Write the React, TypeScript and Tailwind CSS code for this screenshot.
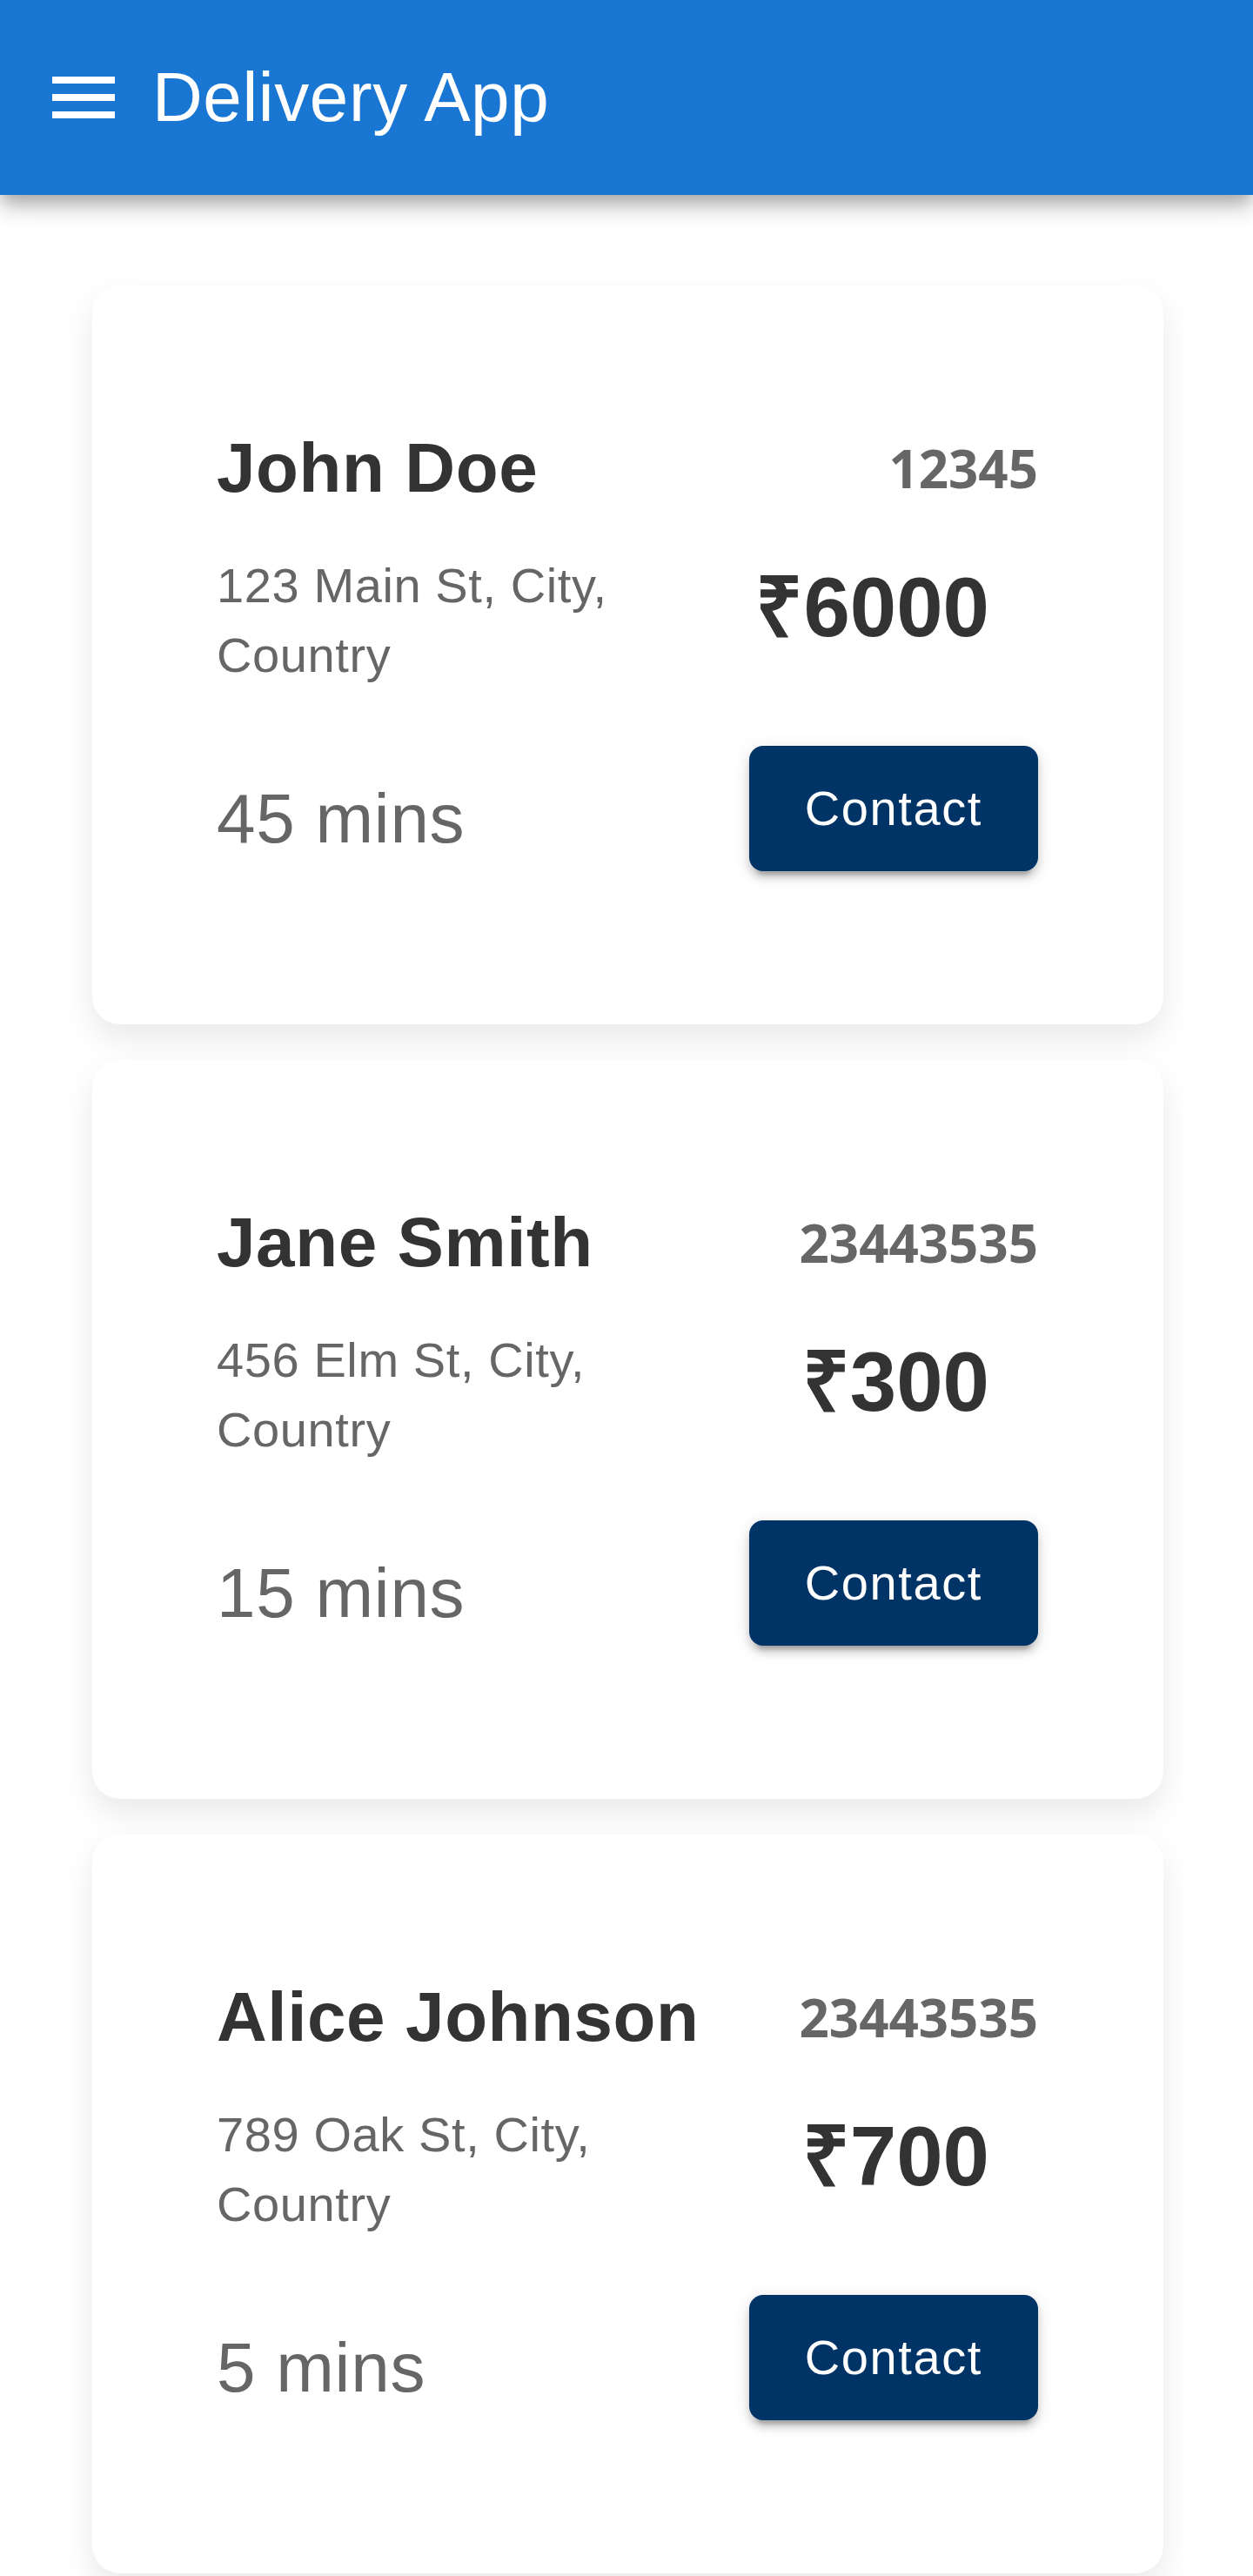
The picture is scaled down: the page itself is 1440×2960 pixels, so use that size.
import React from "react";

type Order = {
  name: string;
  id: string;
  address: string;
  price: string;
  time: string;
};

const orders: Order[] = [
  { name: "John Doe", id: "12345", address: "123 Main St, City, Country", price: "₹6000", time: "45 mins" },
  { name: "Jane Smith", id: "23443535", address: "456 Elm St, City, Country", price: "₹300", time: "15 mins" },
  { name: "Alice Johnson", id: "23443535", address: "789 Oak St, City, Country", price: "₹700", time: "5 mins" },
];

function MenuIcon() {
  return (
    <svg width="96" height="96" viewBox="0 0 24 24" fill="#ffffff" aria-hidden="true">
      <path d="M3 18h18v-2H3zm0-5h18v-2H3zm0-7v2h18V6z" />
    </svg>
  );
}

function OrderCard({ order }: { order: Order }) {
  return (
    <div className="ml-[106px] w-[1231px] rounded-[32px] bg-white pt-[146px] pl-[143px] pr-[144px] pb-[176px] shadow-[0_16px_36px_rgba(0,0,0,0.09)]">
      <div className="flex h-[128px] items-center justify-between">
        <div className="text-[80px] font-bold leading-[128px] tracking-[0.6px] text-[#333333]">{order.name}</div>
        <div className="font-['Open_Sans',sans-serif] text-[60px] font-bold leading-[90px] text-[#666666]">
          {order.id}
        </div>
      </div>
      <div className="mt-[31px] flex items-start justify-between">
        <div className="w-[472px] text-[56px] leading-[80px] tracking-[0.6px] text-[#666666]">{order.address}</div>
        <div className="mr-[56px] mt-[1px] text-[96px] font-bold leading-[128px] text-[#333333]">{order.price}</div>
      </div>
      <div className="mt-[64px] flex items-end justify-between">
        <div className="text-[80px] leading-[120px] tracking-[0.75px] text-[#666666]">{order.time}</div>
        <button
          type="button"
          className="flex h-[144px] items-center rounded-[16px] bg-[#003366] px-[64px] text-[56px] leading-[98px] tracking-[1.6px] text-white shadow-[0_12px_4px_-8px_rgba(0,0,0,0.2),0_8px_8px_0_rgba(0,0,0,0.14),0_4px_20px_0_rgba(0,0,0,0.12)]"
        >
          Contact
        </button>
      </div>
    </div>
  );
}

export default function App() {
  return (
    <div className="min-h-screen bg-white font-['Liberation_Sans',Arial,sans-serif]">
      <header className="relative z-10 flex h-[224px] items-center bg-[#1976d2] pl-[48px] shadow-[0_8px_16px_-4px_rgba(0,0,0,0.2),0_16px_20px_0_rgba(0,0,0,0.14),0_4px_40px_0_rgba(0,0,0,0.12)]">
        <MenuIcon />
        <h1 className="ml-[31px] text-[80px] font-normal leading-[128px] tracking-[0.6px] text-white">Delivery App</h1>
      </header>
      <main className="flex flex-col gap-[41px] pt-[104px]">
        {orders.map((o, i) => (
          <OrderCard key={i} order={o} />
        ))}
      </main>
    </div>
  );
}
